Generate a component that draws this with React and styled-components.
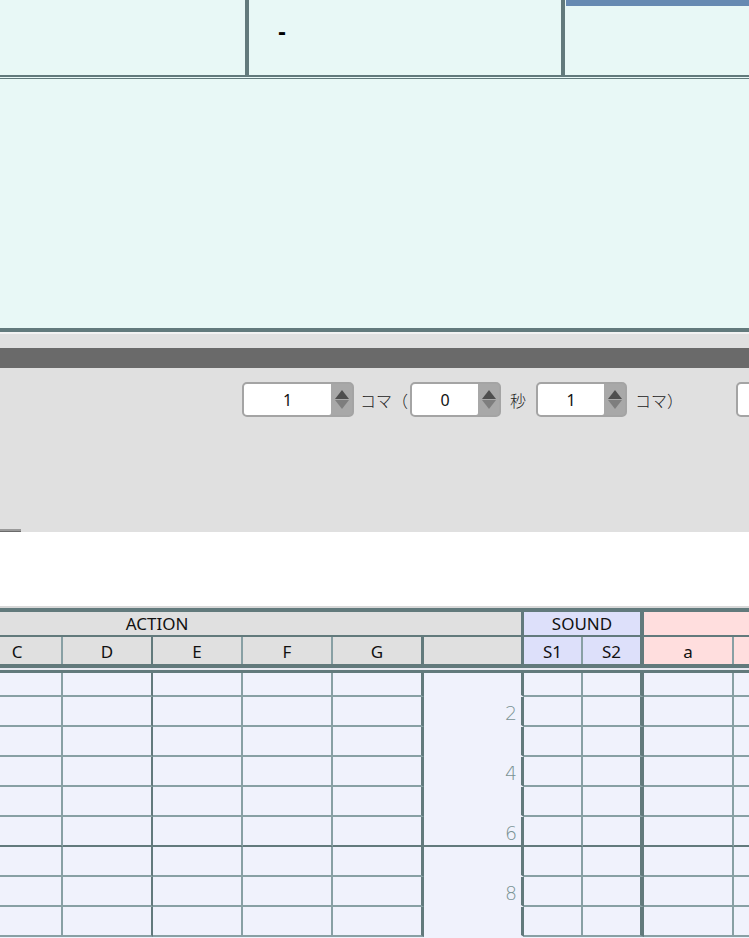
import React from 'react';
import styled, { createGlobalStyle } from 'styled-components';

const DARK = '#627a7c';
const LIGHT = '#88a0a4';

const GlobalStyle = createGlobalStyle`
  html, body {
    margin: 0;
    padding: 0;
    background: #ffffff;
    overflow: hidden;
  }
  body {
    font-family: "Noto Sans", "Noto Sans CJK JP", sans-serif;
    color: #111;
  }
`;

const Page = styled.div`
  width: 749px;
  height: 938px;
  overflow: hidden;
  display: flex;
  flex-direction: column;
`;

/* ---------- top info cells ---------- */
const TopBar = styled.div`
  display: flex;
  height: 75px;
  background: #e8f8f6;
`;

const TopCell = styled.div`
  width: ${(p) => p.$w}px;
  flex: ${(p) => (p.$grow ? 1 : 'none')};
  border-right: ${(p) => (p.$divider ? `4px solid ${DARK}` : 'none')};
  padding: 20px 0 0 ${(p) => p.$pad || 0}px;
  font-family: "Liberation Sans", sans-serif;
  font-size: 24px;
  font-weight: bold;
  line-height: 24px;
  color: #000;
  position: relative;
`;

const BlueStrip = styled.div`
  position: absolute;
  top: 0;
  left: 1px;
  right: 0;
  height: 6px;
  background: #668ab2;
`;

const DoubleRule = styled.div`
  height: 1px;
  border-top: 2px solid ${DARK};
  border-bottom: 1px solid ${DARK};
  background: #e8f8f6;
`;

const Pale = styled.div`
  height: 249px;
  background: #e8f8f6;
  border-bottom: 4px solid ${DARK};
`;

/* ---------- control panel ---------- */
const PanelTop = styled.div`
  height: 14px;
  border-top: 2px solid #f2f2f2;
  background: #e0e0e0;
`;

const PanelBar = styled.div`
  height: 20px;
  background: #6a6a6a;
`;

const Panel = styled.div`
  height: 164px;
  background: #e0e0e0;
  display: flex;
  flex-direction: column;
`;

const SpinRow = styled.div`
  display: flex;
  align-items: center;
  padding: 14px 0 0 242px;
  white-space: nowrap;
`;

const SpinBox = styled.div`
  display: flex;
  flex: none;
  width: ${(p) => p.$w}px;
  height: 31px;
  border: 2px solid #a4a4a4;
  border-radius: 5px;
  overflow: hidden;
  background: #a8a8a8;
`;

const SpinValue = styled.div`
  flex: 1;
  background: #ffffff;
  display: flex;
  align-items: center;
  justify-content: center;
  font-size: 16px;
  color: #111;
  border-bottom-right-radius: 2px;
`;

const SpinArrows = styled.div`
  width: 21px;
  display: flex;
  flex-direction: column;
  align-items: center;
  justify-content: center;
  gap: 1px;
`;

const SpinLabel = styled.span`
  font-family: "Noto Sans CJK JP", sans-serif;
  font-size: 16px;
  font-weight: 300;
  color: #222;
  margin: 0 ${(p) => p.$right}px 0 ${(p) => p.$left}px;
`;

const ScrollMark = styled.div`
  margin-top: auto;
  width: 21px;
  height: 2px;
  background: #9a9a9a;
  border-bottom: 1px solid #6a6a6a;
`;

const Gap = styled.div`
  height: 74px;
  background: #ffffff;
  border-bottom: 2px solid #d8d8d8;
`;

/* ---------- timesheet table ---------- */
const Sheet = styled.div`
  flex: 1;
  overflow: hidden;
  border-top: 4px solid ${DARK};
  background: #f0f2fc;
`;

const Scroller = styled.div`
  margin-left: -207px;
  width: 1300px;
`;

const HeadRow = styled.div`
  display: flex;
  height: ${(p) => p.$h}px;
  border-bottom: ${(p) => (p.$border ? `2px solid ${DARK}` : 'none')};
`;

const GroupCell = styled.div`
  width: ${(p) => p.$w}px;
  flex: none;
  background: ${(p) => p.$bg};
  border-right: ${(p) => p.$b}px solid ${DARK};
  display: flex;
  align-items: center;
  justify-content: center;
  font-size: 17px;
  line-height: 20px;
`;

const ColHead = styled.div`
  width: ${(p) => p.$w}px;
  flex: none;
  background: ${(p) => p.$bg};
  border-right: ${(p) => p.$b}px solid ${(p) => p.$c};
  display: flex;
  align-items: center;
  justify-content: center;
  font-size: 17px;
  line-height: 20px;
  padding-top: 3px;
`;

const HeadSeparator = styled.div`
  height: 2px;
  border-top: 4px solid ${DARK};
  border-bottom: 3px solid ${DARK};
  background: #e6e8f0;
`;

const BodyRow = styled.div`
  display: flex;
  height: ${(p) => p.$h}px;
`;

const Cell = styled.div`
  width: ${(p) => p.$w}px;
  flex: none;
  background: #f0f2fc;
  border-right: ${(p) => p.$b}px solid ${(p) => p.$c};
  border-bottom: 2px solid ${(p) => p.$line};
`;

const NumCell = styled(Cell)`
  display: flex;
  align-items: flex-end;
  justify-content: flex-end;
  padding-right: 4px;
  font-family: "DejaVu Sans", sans-serif;
  font-weight: 200;
  font-size: 19px;
  line-height: 24px;
  color: #7a9294;
`;

// A and B are scrolled out of view to the left; b, c to the right
const columns = [
  { key: '', w: 88, b: 2, c: LIGHT, bg: '#e0e0e0' },
  { key: '', w: 88, b: 2, c: LIGHT, bg: '#e0e0e0' },
  { key: 'C', w: 88, b: 2, c: LIGHT, bg: '#e0e0e0' },
  { key: 'D', w: 88, b: 2, c: DARK, bg: '#e0e0e0' },
  { key: 'E', w: 88, b: 2, c: LIGHT, bg: '#e0e0e0' },
  { key: 'F', w: 88, b: 2, c: LIGHT, bg: '#e0e0e0' },
  { key: 'G', w: 88, b: 3, c: DARK, bg: '#e0e0e0' },
  { key: '', w: 97, b: 3, c: DARK, bg: '#e0e0e0', num: true },
  { key: 'S1', w: 57, b: 2, c: LIGHT, bg: '#dde0fa' },
  { key: 'S2', w: 57, b: 4, c: DARK, bg: '#dde0fa' },
  { key: 'a', w: 88, b: 2, c: LIGHT, bg: '#ffdede' },
  { key: '', w: 88, b: 2, c: LIGHT, bg: '#ffdede' },
  { key: '', w: 88, b: 2, c: LIGHT, bg: '#ffdede' },
];

const groups = [
  { label: 'ACTION', w: 728, b: 3, bg: '#e0e0e0' },
  { label: 'SOUND', w: 116, b: 4, bg: '#dde0fa' },
  { label: '', w: 300, b: 0, bg: '#ffdede' },
];

const Spinner = ({ value, width }) => (
  <SpinBox $w={width}>
    <SpinValue>{value}</SpinValue>
    <SpinArrows>
      <svg width="14" height="9" viewBox="0 0 14 9">
        <polygon points="7,0 14,9 0,9" fill="#4e4e4e" />
      </svg>
      <svg width="14" height="9" viewBox="0 0 14 9">
        <polygon points="0,0 14,0 7,9" fill="#7e7e7e" />
      </svg>
    </SpinArrows>
  </SpinBox>
);

const rows = Array.from({ length: 9 }, (_, i) => i + 1);

export default function App() {
  return (
    <Page>
      <GlobalStyle />
      <TopBar>
        <TopCell $w={245} $divider />
        <TopCell $w={283} $pad={29} $divider>-</TopCell>
        <TopCell $grow>
          <BlueStrip />
        </TopCell>
      </TopBar>
      <DoubleRule />
      <Pale />

      <PanelTop />
      <PanelBar />
      <Panel>
        <SpinRow>
          <Spinner value="1" width={108} />
          <SpinLabel $left={6} $right={2}>コマ（</SpinLabel>
          <Spinner value="0" width={87} />
          <SpinLabel $left={9} $right={10}>秒</SpinLabel>
          <Spinner value="1" width={87} />
          <SpinLabel $left={8} $right={53}>コマ）</SpinLabel>
          <Spinner value="" width={87} />
        </SpinRow>
        <ScrollMark />
      </Panel>
      <Gap />

      <Sheet>
        <Scroller>
          <HeadRow $h={23} $border>
            {groups.map((g) => (
              <GroupCell key={g.label || 'dialog'} $w={g.w} $b={g.b} $bg={g.bg}>
                {g.label}
              </GroupCell>
            ))}
          </HeadRow>
          <HeadRow $h={27}>
            {columns.map((col, i) => (
              <ColHead key={i} $w={col.w} $b={col.b} $c={col.c} $bg={col.bg}>
                {col.key}
              </ColHead>
            ))}
          </HeadRow>
          <HeadSeparator />
          {rows.map((r) => {
            const blockEnd = r % 6 === 0;
            const line = blockEnd ? DARK : LIGHT;
            return (
              <BodyRow key={r} $h={r === 1 ? 24 : 30}>
                {columns.map((col, i) =>
                  col.num ? (
                    <NumCell
                      key={i}
                      $w={col.w - 4}
                      $b={col.b}
                      $c={col.c}
                      $line={blockEnd ? DARK : 'transparent'}
                    >
                      {r % 2 === 0 ? r : ''}
                    </NumCell>
                  ) : (
                    <Cell key={i} $w={col.w} $b={col.b} $c={col.c} $line={line} />
                  )
                )}
              </BodyRow>
            );
          })}
        </Scroller>
      </Sheet>
    </Page>
  );
}
